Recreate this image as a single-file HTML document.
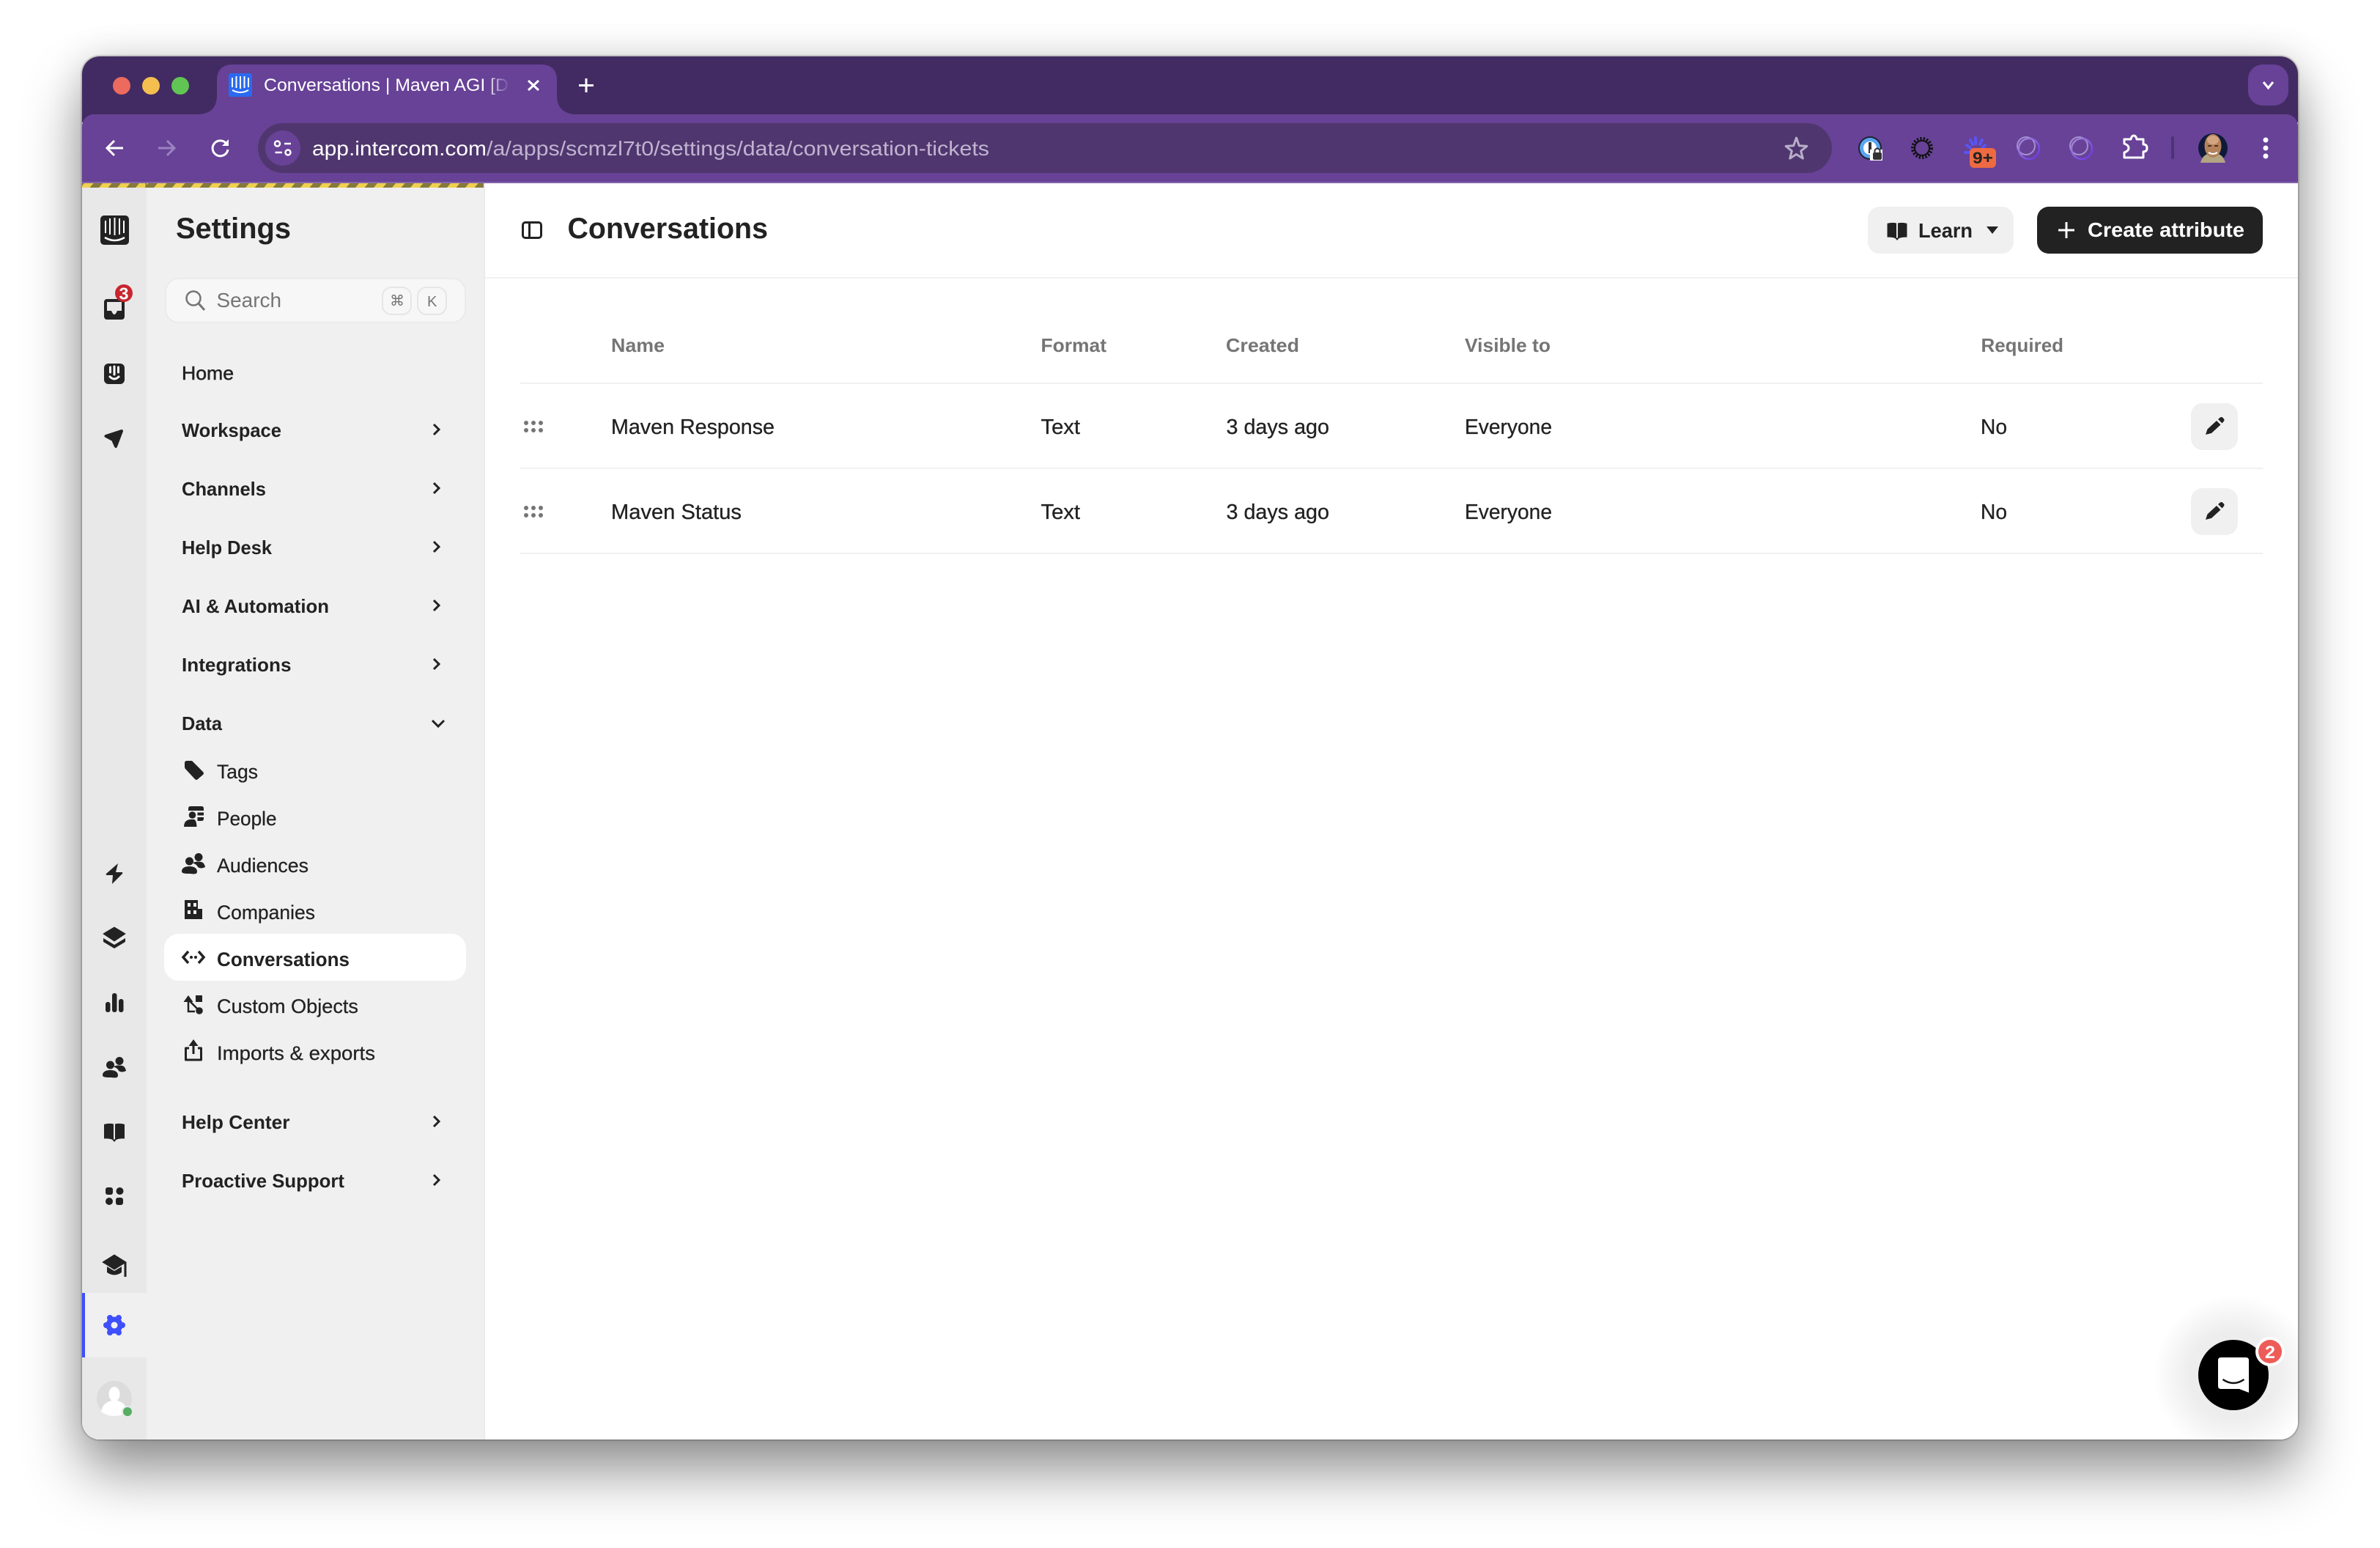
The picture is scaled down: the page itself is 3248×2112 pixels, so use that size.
<!DOCTYPE html>
<html lang="en"><head><meta charset="utf-8"><title>Conversations | Maven AGI</title>
<style>
html,body{margin:0;padding:0;background:#fff;width:3248px;height:2112px;overflow:hidden}
#sh{position:absolute;left:112px;top:77px;width:3024px;height:1887px;border-radius:24px;box-shadow:0 0 2px 1px rgba(0,0,0,.32),0 44px 80px rgba(0,0,0,.42),0 0 50px rgba(0,0,0,.12)}
svg{position:absolute;left:0;top:0}
text{font-family:"Liberation Sans",sans-serif;fill:#222}
.b{font-weight:700}
.n{font-size:26px;font-weight:700}
.s{font-size:26.5px;stroke:#222;stroke-width:.25px}
.r{font-size:28.5px;stroke:#222;stroke-width:.3px}
.s.b{stroke:none}
.h{font-size:26px;font-weight:700;fill:#757575}
.i{fill:#222}
</style></head><body>
<div id="sh"></div>
<svg width="3248" height="2112" viewBox="0 0 3248 2112" xmlns="http://www.w3.org/2000/svg">
<defs>
<clipPath id="w"><rect x="112" y="77" width="3024" height="1887" rx="24"/></clipPath>
<pattern id="hz" patternUnits="userSpaceOnUse" x="10" y="250" width="25" height="6"><rect width="25" height="6" fill="#857a3c"/><polygon points="5,0 17.5,0 12.5,6 0,6" fill="#f0d050"/><polygon points="30,0 42.5,0 37.5,6 25,6" fill="#f0d050"/></pattern>
<linearGradient id="fade" gradientUnits="userSpaceOnUse" x1="662" y1="0" x2="696" y2="0"><stop offset="0" stop-color="#fff"/><stop offset="1" stop-color="#fff" stop-opacity="0"/></linearGradient>
<linearGradient id="rg" x1="0" y1="0" x2="1" y2="1"><stop offset="0" stop-color="#a78fd6"/><stop offset="1" stop-color="#6a30e8"/></linearGradient>
<radialGradient id="glow"><stop offset=".55" stop-color="#000" stop-opacity=".07"/><stop offset="1" stop-color="#000" stop-opacity="0"/></radialGradient>
<symbol id="ppl" viewBox="0 0 32 28" overflow="visible"><circle cx="10.5" cy="11" r="5.5"/><path d="M0 25C0 20 5 18 10.5 18S21 20 21 25 15 28 10.5 28 0 28 0 25Z"/><circle cx="23" cy="5.5" r="5.5"/><path d="M15 13.500C18 11 26 11 29 13 31 15 32 18 32 19 28 21 25 21 22 19 21 16 18 14.500 15 13.500Z"/></symbol>
<symbol id="book" viewBox="0 0 28 26" overflow="visible"><path d="M0 2Q6.500 0 13 1.500V23.500Q7 21 0 21.500Z"/><path d="M28 2Q21.500 0 15 1.500V23.500Q21 21 28 21.500Z"/><path d="M11 22.500H17L14 26Z"/></symbol>
<symbol id="chev" viewBox="0 0 12 18" overflow="visible"><path d="M2 2L9 9L2 16" fill="none" stroke="#222" stroke-width="3"/></symbol>
<symbol id="pen" viewBox="0 0 26 25" overflow="visible"><path d="M0 24L2.500 16.500L15 5L20.500 10.500L8 22Z"/><path d="M17 3L20 .5Q21.500-.5 23 .5L25 2.500Q26 4 25 5.500L22.500 8.500Z"/></symbol>
</defs>
<g clip-path="url(#w)">
<!-- tab strip -->
<rect x="112" y="77" width="3024" height="90" fill="#422b62"/>
<rect x="112" y="156" width="3024" height="110" rx="16" fill="#674297"/>
<path d="M272 156Q296 154 296 130V110Q296 88 318 88H738Q760 88 760 110V130Q760 154 784 156V172H272Z" fill="#674297"/>
<rect x="112" y="248" width="3024" height="2" fill="#8364ab"/>
<circle cx="166" cy="117" r="12" fill="#ec6a5e"/><circle cx="206" cy="117" r="12" fill="#f4bf4f"/><circle cx="246" cy="117" r="12" fill="#61c554"/>
<!-- favicon -->
<rect x="312" y="100" width="32" height="32" rx="3" fill="#2a6af0"/>
<path d="M317 106V119M322.500 104V120M328 104V121M333.500 104V120M339 106V119" stroke="#fff" stroke-width="2" fill="none"/>
<path d="M317 123Q328 129 339 123" stroke="#fff" stroke-width="2" fill="none"/>
<text x="360" y="124" font-size="24" textLength="334" lengthAdjust="spacingAndGlyphs" style="fill:url(#fade)">Conversations | Maven AGI [D</text>
<path d="M721 110L735 123M735 110L721 123" stroke="#fff" stroke-width="3" fill="none"/>
<path d="M800 107V126M790 116.500H810" stroke="#fff" stroke-width="3" fill="none"/>
<rect x="3068" y="88" width="55" height="56" rx="20" fill="#674297"/>
<path d="M3089 112L3095.500 120L3102 112" stroke="#fff" stroke-width="3" fill="none"/>
<!-- nav -->
<path d="M168 202H147M156 192L146 202L156 212" stroke="#fff" stroke-width="3" fill="none"/>
<path d="M216 202H237M228 192L238 202L228 212" stroke="#9c83c2" stroke-width="3" fill="none"/>
<path d="M309 196A10.500 10.500 0 1 0 311 204" stroke="#fff" stroke-width="3" fill="none"/><polygon points="312,190 312,199 303,199" fill="#fff"/>
<rect x="352" y="168" width="2148" height="68" rx="34" fill="#50366f"/>
<circle cx="386" cy="202" r="24" fill="#674297"/>
<circle cx="378.500" cy="196" r="3.500" fill="none" stroke="#fff" stroke-width="2.500"/><path d="M388 196H397M375.500 208H385" stroke="#fff" stroke-width="2.500"/><circle cx="393" cy="208" r="3.500" fill="none" stroke="#fff" stroke-width="2.500"/>
<text x="426" y="212" font-size="28" textLength="238" lengthAdjust="spacingAndGlyphs" style="fill:#fff">app.intercom.com</text>
<text x="664" y="212" font-size="28" textLength="686" lengthAdjust="spacingAndGlyphs" style="fill:#c0b4d0">/a/apps/scmzl7t0/settings/data/conversation-tickets</text>
<polygon transform="translate(2451.500 204)" points="0,-16 3.800,-5.300 14.300,-4.600 6.200,2 8.800,12.100 0,6.500 -8.800,12.100 -6.200,2 -14.300,-4.600 -3.800,-5.300" fill="none" stroke="#b8aec8" stroke-width="3" stroke-linejoin="round"/>
<!-- extensions -->
<circle cx="2552" cy="202" r="16" fill="#1f2233"/><circle cx="2552" cy="202" r="14" fill="#5aa5f0"/><circle cx="2552" cy="202" r="9" fill="#fff"/><rect x="2550" y="194" width="4" height="15" fill="#333"/>
<rect x="2552" y="204" width="17" height="15" fill="#fff"/><rect x="2556" y="208" width="12" height="10" rx="2" fill="#333"/><path d="M2558.500 208V205Q2562 200 2565.500 205V208" fill="none" stroke="#333" stroke-width="2"/>
<circle cx="2623" cy="202" r="12.500" fill="none" stroke="#111" stroke-width="5" stroke-dasharray="2.200 2.100"/><circle cx="2623" cy="202" r="10" fill="none" stroke="#111" stroke-width="2"/>
<g fill="none" stroke="#5a55f0" stroke-width="4" stroke-linecap="round"><path d="M2688 208H2682M2689 202L2684 198M2692 197L2689 191M2696 196V188M2702 197L2705 191M2705 202L2709 198"/></g>
<rect x="2688" y="202" width="36" height="27" rx="6" fill="#ee6a42"/>
<text x="2692" y="223" font-size="22" class="b" textLength="28" lengthAdjust="spacingAndGlyphs">9+</text>
<circle cx="2765" cy="199" r="12" fill="none" stroke="#a58fd0" stroke-width="2"/><circle cx="2769" cy="203" r="14" fill="none" stroke="url(#rg)" stroke-width="2.500"/>
<circle cx="2837" cy="199" r="12" fill="none" stroke="#a58fd0" stroke-width="2"/><circle cx="2841" cy="203" r="14" fill="none" stroke="url(#rg)" stroke-width="2.500"/>
<path d="M2899 190H2908Q2909 185 2912 185Q2915 185 2916 190H2925V197Q2930 197 2930 202Q2930 207 2925 207V215H2899V208Q2905 206 2905 202Q2905 198 2899 196Z" fill="none" stroke="#fff" stroke-width="3" stroke-linejoin="round"/>
<rect x="2963" y="186" width="4" height="31" rx="2" fill="#4e3274"/>
<ellipse cx="3020" cy="202" rx="20" ry="20" fill="#0f1a3a"/>
<path d="M3003 222Q3006 211 3014 210H3026Q3034 211 3037 222Z" fill="#b3a582"/>
<ellipse cx="3020" cy="199" rx="11.500" ry="16" fill="#b4825a"/><ellipse cx="3020" cy="191" rx="8" ry="6" fill="#d2a480"/>
<path d="M3013 199H3018M3022 199H3027" stroke="#4f3020" stroke-width="2"/><path d="M3014 208Q3020 212 3026 208" stroke="#fff" stroke-width="2" fill="none"/>
<circle cx="3092" cy="191" r="3.500" fill="#fff"/><circle cx="3092" cy="202" r="3.500" fill="#fff"/><circle cx="3092" cy="213" r="3.500" fill="#fff"/>
<!-- body -->
<rect x="112" y="250" width="3024" height="1720" fill="#fff"/>
<rect x="112" y="250" width="88" height="1720" fill="#e8e8e8"/>
<rect x="200" y="250" width="460" height="1720" fill="#f0f0f0"/>
<rect x="660" y="250" width="2" height="1720" fill="#ebebeb"/>
<rect x="112" y="250" width="548" height="6" fill="url(#hz)"/>
<rect x="198.500" y="250" width="2" height="6" fill="#857a3c"/>
<rect x="662" y="378" width="2474" height="2" fill="#f1f1f1"/>
<!-- rail -->
<rect x="137" y="294" width="39" height="40" rx="5" class="i"/>
<path d="M144 301V318M150 298V320M156.500 297V321M163 298V320M169 301V318" stroke="#fff" stroke-width="2" fill="none"/><path d="M143 324Q156.500 332 170 324" stroke="#fff" stroke-width="2.500" fill="none"/>
<rect x="142" y="408" width="28" height="28" rx="4" class="i"/>
<path d="M146 412H166V424H160Q158 429 156 429Q154 429 152 424H146Z" fill="#e8e8e8"/>
<circle cx="169" cy="400" r="12" fill="#c8252f"/><text x="162.500" y="408.500" font-size="23" class="b" textLength="13" lengthAdjust="spacingAndGlyphs" style="fill:#fff">3</text>
<rect x="142" y="496" width="28" height="28" rx="6" class="i"/>
<path d="M150.500 501V508M156 500V511M161.500 501V508" stroke="#fff" stroke-width="3" stroke-linecap="round" fill="none"/><path d="M150 514Q156 520 162 514" stroke="#fff" stroke-width="3" fill="none" stroke-linecap="round"/>
<path d="M144.500 595L166 588L158 609L154 600Z" class="i" stroke="#222" stroke-width="4" stroke-linejoin="round"/>
<path d="M161 1178L145 1192Q144 1194 146 1194H154L153 1206L167 1192Q168 1190 166 1190H158Z" class="i"/>
<path d="M156 1265L171 1274L156 1284L141 1274Z" class="i" stroke="#222" stroke-width="1" stroke-linejoin="round"/><path d="M141 1280L156 1289L171 1280V1285L156 1294L141 1285Z" class="i"/>
<rect x="144" y="1367" width="6.500" height="14" rx="3" class="i"/><rect x="153" y="1355" width="6.500" height="26" rx="3" class="i"/><rect x="162" y="1363" width="6.500" height="18" rx="3" class="i"/>
<use href="#ppl" x="140" y="1442" width="32" height="28" class="i"/>
<use href="#book" x="142" y="1532" width="28" height="26" class="i"/>
<rect x="144" y="1620" width="10" height="10" rx="3" class="i"/><circle cx="163.500" cy="1625" r="5" class="i"/><circle cx="149" cy="1639" r="5" class="i"/><rect x="158" y="1634" width="10" height="10" rx="3" class="i"/>
<path d="M156 1712L172 1722L156 1732L140 1722Z" class="i" stroke="#222" stroke-width="1" stroke-linejoin="round"/><path d="M146 1728V1736Q156 1743 166 1736V1728L156 1734Z" class="i"/><rect x="169.500" y="1722" width="3" height="20" class="i"/>
<rect x="112" y="1764" width="88" height="88" fill="#f0f0f0"/><rect x="112" y="1764" width="4" height="88" fill="#3e4ffb"/>
<g fill="#3e4ffb"><circle cx="156" cy="1808" r="11.500"/><circle cx="167" cy="1808" r="4"/><circle cx="145" cy="1808" r="4"/><circle cx="162" cy="1798" r="4"/><circle cx="150" cy="1798" r="4"/><circle cx="162" cy="1818" r="4"/><circle cx="150" cy="1818" r="4"/></g><circle cx="156" cy="1808" r="4.500" fill="#f0f0f0"/>
<circle cx="156" cy="1908" r="24" fill="#dcdcdc"/>
<ellipse cx="156" cy="1902" rx="7.500" ry="10" fill="#fff"/><path d="M138 1926Q140 1914 152 1911H160Q172 1914 174 1926Q166 1932 156 1932Q146 1932 138 1926Z" fill="#fff"/>
<circle cx="174" cy="1926" r="8" fill="#e8e8e8"/><circle cx="174" cy="1926" r="6" fill="#55ae62"/>
<!-- sidebar -->
<text x="240" y="325" font-size="40" class="b" textLength="157" lengthAdjust="spacingAndGlyphs">Settings</text>
<rect x="226" y="380" width="409" height="60" rx="18" fill="#f7f7f7" stroke="#ebebeb" stroke-width="2"/>
<circle cx="264" cy="407" r="9.500" fill="none" stroke="#757575" stroke-width="2.500"/><path d="M271 414L279 423" stroke="#757575" stroke-width="3"/>
<text x="295.500" y="419" font-size="28" textLength="88.500" lengthAdjust="spacingAndGlyphs" style="fill:#757575">Search</text>
<rect x="522" y="392" width="39" height="37" rx="12" fill="none" stroke="#e6e6e6" stroke-width="2"/><rect x="570" y="392" width="39" height="37" rx="12" fill="none" stroke="#e6e6e6" stroke-width="2"/>
<text x="532" y="417" font-size="20" style="font-family:'DejaVu Sans',sans-serif;fill:#757575">⌘</text>
<text x="583" y="418" font-size="20" style="fill:#757575">K</text>
<text x="248" y="518" font-size="26" stroke="#222" stroke-width=".5" textLength="71" lengthAdjust="spacingAndGlyphs">Home</text>
<text x="248" y="596" class="n" textLength="136" lengthAdjust="spacingAndGlyphs">Workspace</text>
<text x="248" y="676" class="n" textLength="115" lengthAdjust="spacingAndGlyphs">Channels</text>
<text x="248" y="756" class="n" textLength="123" lengthAdjust="spacingAndGlyphs">Help Desk</text>
<text x="248" y="836" class="n" textLength="201" lengthAdjust="spacingAndGlyphs">AI &amp; Automation</text>
<text x="248" y="916" class="n" textLength="149.500" lengthAdjust="spacingAndGlyphs">Integrations</text>
<text x="248" y="996" class="n" textLength="55" lengthAdjust="spacingAndGlyphs">Data</text>
<text x="248" y="1540" class="n" textLength="147.500" lengthAdjust="spacingAndGlyphs">Help Center</text>
<text x="248" y="1620" class="n" textLength="222" lengthAdjust="spacingAndGlyphs">Proactive Support</text>
<use href="#chev" x="590" y="577" width="12" height="18"/><use href="#chev" x="590" y="657" width="12" height="18"/><use href="#chev" x="590" y="737" width="12" height="18"/><use href="#chev" x="590" y="817" width="12" height="18"/><use href="#chev" x="590" y="897" width="12" height="18"/><use href="#chev" x="590" y="1521" width="12" height="18"/><use href="#chev" x="590" y="1601" width="12" height="18"/>
<path d="M590 983L598 991L606 983" stroke="#222" stroke-width="3" fill="none"/>
<rect x="224" y="1274" width="412" height="64" rx="20" fill="#fff"/>
<text x="296" y="1062" class="s" textLength="56" lengthAdjust="spacingAndGlyphs">Tags</text>
<text x="296" y="1126" class="s" textLength="81.500" lengthAdjust="spacingAndGlyphs">People</text>
<text x="296" y="1190" class="s" textLength="125" lengthAdjust="spacingAndGlyphs">Audiences</text>
<text x="296" y="1254" class="s" textLength="134" lengthAdjust="spacingAndGlyphs">Companies</text>
<text x="296" y="1318" class="s b" textLength="181" lengthAdjust="spacingAndGlyphs">Conversations</text>
<text x="296" y="1382" class="s" textLength="193" lengthAdjust="spacingAndGlyphs">Custom Objects</text>
<text x="296" y="1446" class="s" textLength="216" lengthAdjust="spacingAndGlyphs">Imports &amp; exports</text>
<!-- sub icons -->
<path d="M252 1041Q252 1038 255 1038H262L277 1053Q279 1055 277 1057L270 1063Q268 1065 266 1063L253 1049Q252 1048 252 1046Z" class="i"/>
<path d="M257 1107V1103Q257 1100 260 1100H275Q278 1100 278 1103V1106H257Z" class="i"/><rect x="269.500" y="1108.500" width="8.500" height="4" class="i"/><path d="M269.500 1115H278V1117Q278 1120 275 1120H269.500Z" class="i"/><circle cx="262.500" cy="1112" r="4.800" class="i"/><path d="M251 1128Q251 1119 259.500 1118H265Q268 1119 268.500 1128Z" class="i"/>
<use href="#ppl" x="248" y="1164" width="32" height="28" class="i"/>
<path d="M252 1228H270V1240H276V1254H252Z" class="i"/><g fill="#f0f0f0"><rect x="256" y="1232" width="4" height="5"/><rect x="264" y="1232" width="4" height="5"/><rect x="256" y="1242" width="4" height="5"/><rect x="264" y="1242" width="4" height="5"/></g>
<path d="M257 1298L250 1306L257 1314M271 1298L278 1306L271 1314" stroke="#222" stroke-width="3.500" fill="none"/><circle cx="261" cy="1306" r="2" class="i"/><circle cx="267" cy="1306" r="2" class="i"/>
<path d="M250.500 1367L257 1358L263.500 1367Z" class="i"/><rect x="267" y="1358" width="9" height="9" class="i"/><circle cx="272" cy="1379" r="4.800" class="i"/><path d="M257 1365V1380H266M259 1366L271 1378" stroke="#222" stroke-width="2.500" fill="none"/>
<path d="M258 1430H253.500V1446H274.500V1430H270" stroke="#222" stroke-width="3" fill="none" stroke-linejoin="round"/><path d="M264 1438V1424" stroke="#222" stroke-width="3"/><path d="M257.500 1427L264 1418L270.500 1427Z" class="i"/>
<!-- header -->
<rect x="713.500" y="303.500" width="25" height="21" rx="3.500" fill="none" stroke="#222" stroke-width="3"/><path d="M722.500 304V324" stroke="#222" stroke-width="3"/>
<text x="774.500" y="325" font-size="40" class="b" textLength="273.500" lengthAdjust="spacingAndGlyphs">Conversations</text>
<rect x="2549" y="282" width="199" height="64" rx="16" fill="#f0f0f0"/>
<use href="#book" x="2575" y="303" width="28" height="25" class="i"/>
<text x="2618" y="324" font-size="28" class="b" textLength="74" lengthAdjust="spacingAndGlyphs" stroke="none">Learn</text>
<path d="M2711 309H2727L2719 319Z" class="i"/>
<rect x="2780" y="282" width="308" height="64" rx="16" fill="#222"/>
<path d="M2820 303V325M2809 314H2831" stroke="#fff" stroke-width="3" fill="none"/>
<text x="2849" y="323" font-size="28" class="b" textLength="214" lengthAdjust="spacingAndGlyphs" style="fill:#fff">Create attribute</text>
<!-- table -->
<text x="834" y="480" class="h" textLength="73" lengthAdjust="spacingAndGlyphs">Name</text>
<text x="1420.500" y="480" class="h" textLength="89.500" lengthAdjust="spacingAndGlyphs">Format</text>
<text x="1673" y="480" class="h" textLength="100" lengthAdjust="spacingAndGlyphs">Created</text>
<text x="1999" y="480" class="h" textLength="117" lengthAdjust="spacingAndGlyphs">Visible to</text>
<text x="2703.500" y="480" class="h" textLength="112.500" lengthAdjust="spacingAndGlyphs">Required</text>
<rect x="710" y="522" width="2378" height="2" fill="#f1f1f1"/><rect x="710" y="638" width="2378" height="2" fill="#f1f1f1"/><rect x="710" y="754" width="2378" height="2" fill="#f1f1f1"/>
<g fill="#757575"><circle cx="718" cy="577" r="3"/><circle cx="728" cy="577" r="3"/><circle cx="738" cy="577" r="3"/><circle cx="718" cy="587" r="3"/><circle cx="728" cy="587" r="3"/><circle cx="738" cy="587" r="3"/><circle cx="718" cy="693" r="3"/><circle cx="728" cy="693" r="3"/><circle cx="738" cy="693" r="3"/><circle cx="718" cy="703" r="3"/><circle cx="728" cy="703" r="3"/><circle cx="738" cy="703" r="3"/></g>
<text x="834" y="592" class="r" textLength="223" lengthAdjust="spacingAndGlyphs">Maven Response</text>
<text x="1420.500" y="592" class="r" textLength="53.500" lengthAdjust="spacingAndGlyphs">Text</text>
<text x="1673.500" y="592" class="r" textLength="140.500" lengthAdjust="spacingAndGlyphs">3 days ago</text>
<text x="1999" y="592" class="r" textLength="119" lengthAdjust="spacingAndGlyphs">Everyone</text>
<text x="2703" y="592" class="r" textLength="36" lengthAdjust="spacingAndGlyphs">No</text>
<text x="834" y="708" class="r" textLength="178" lengthAdjust="spacingAndGlyphs">Maven Status</text>
<text x="1420.500" y="708" class="r" textLength="53.500" lengthAdjust="spacingAndGlyphs">Text</text>
<text x="1673.500" y="708" class="r" textLength="140.500" lengthAdjust="spacingAndGlyphs">3 days ago</text>
<text x="1999" y="708" class="r" textLength="119" lengthAdjust="spacingAndGlyphs">Everyone</text>
<text x="2703" y="708" class="r" textLength="36" lengthAdjust="spacingAndGlyphs">No</text>
<rect x="2990" y="550" width="64" height="64" rx="16" fill="#f0f0f0"/><rect x="2990" y="666" width="64" height="64" rx="16" fill="#f0f0f0"/>
<use href="#pen" x="3010" y="569" width="26" height="25" class="i"/><use href="#pen" x="3010" y="685" width="26" height="25" class="i"/>
<!-- messenger -->
<circle cx="3048" cy="1876" r="110" fill="url(#glow)"/>
<circle cx="3048" cy="1876" r="48" fill="#000"/>
<path d="M3027 1856Q3027 1852 3031 1852H3065Q3069 1852 3069 1856V1900L3056 1895H3031Q3027 1895 3027 1891Z" fill="#fff"/>
<path d="M3033.500 1882Q3048 1892 3062.500 1882" fill="none" stroke="#111" stroke-width="2.500"/>
<circle cx="3098" cy="1844" r="20" fill="#fff"/><circle cx="3098" cy="1844" r="16" fill="#ee5c58"/>
<text x="3091" y="1853" font-size="24" class="b" textLength="14" lengthAdjust="spacingAndGlyphs" style="fill:#fff">2</text>
</g>
</svg>
</body></html>
